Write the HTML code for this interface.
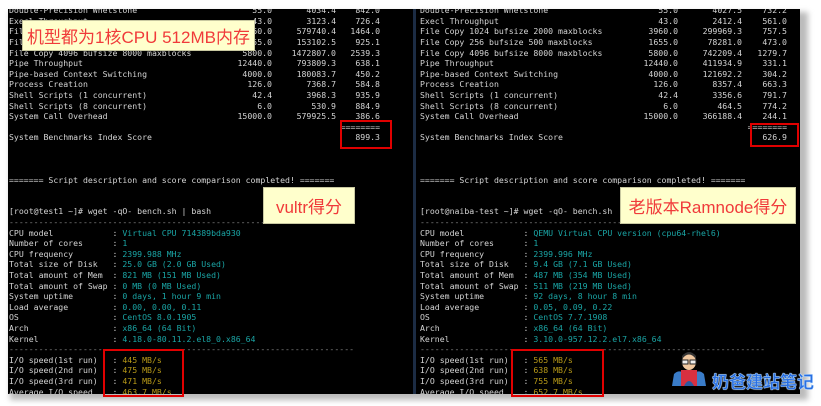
<!DOCTYPE html>
<html><head><meta charset="utf-8"><style>
*{margin:0;padding:0;box-sizing:border-box}
body{width:821px;height:406px;background:#fff;position:relative;overflow:hidden;font-family:"DejaVu Sans Mono","Liberation Mono",monospace}
.shadow{position:absolute;left:10px;top:12px;width:798px;height:388px;background:#bbb;filter:blur(3px)}
.panel{position:absolute;top:9px;height:385px;background:#000;overflow:hidden}
#L{left:8px;width:406px}
#R{left:416px;width:384px}
.div{position:absolute;left:413px;top:9px;width:3px;height:385px;background:#1c2c44}
.txt{position:absolute;left:1px;top:-3.8px;right:0;font-size:8.2px;color:#d4d4d4}
#R .txt{left:4px}
.r{position:relative;height:10.6px;line-height:10.6px;white-space:pre}
.r span{position:absolute;top:0}
.c{color:#1aa5a5;font-weight:normal}
.y{color:#b89a18;font-weight:normal}
.d{color:#888}
.box{position:absolute;background:#ffffcc;border:1px solid #c8c8a0;color:#f03a3a;font-family:"Liberation Sans","Noto Sans CJK SC",sans-serif;font-size:17px;display:flex;align-items:center;justify-content:center;white-space:nowrap}
.red{position:absolute;border:2px solid #e00000}
.logo{position:absolute;left:712px;top:368px;font-family:"Noto Sans CJK SC",sans-serif;font-size:17px;font-weight:bold;color:#2a6ee0;-webkit-text-stroke:0.4px #9cf;text-shadow:0 0 1px #fff,0 0 1px #fff}
</style></head><body>
<div class="shadow"></div>
<div class="panel" id="L"><div class="txt">
<div class="r">Double-Precision Whetstone<span style="right:142px">55.0</span><span style="right:78px">4034.4</span><span style="right:34px">842.0</span></div>
<div class="r">Execl Throughput<span style="right:142px">43.0</span><span style="right:78px">3123.4</span><span style="right:34px">726.4</span></div>
<div class="r">File Copy 1024 bufsize 2000 maxblocks<span style="right:142px">3960.0</span><span style="right:78px">579740.4</span><span style="right:34px">1464.0</span></div>
<div class="r">File Copy 256 bufsize 500 maxblocks<span style="right:142px">1655.0</span><span style="right:78px">153102.5</span><span style="right:34px">925.1</span></div>
<div class="r">File Copy 4096 bufsize 8000 maxblocks<span style="right:142px">5800.0</span><span style="right:78px">1472807.0</span><span style="right:34px">2539.3</span></div>
<div class="r">Pipe Throughput<span style="right:142px">12440.0</span><span style="right:78px">793809.3</span><span style="right:34px">638.1</span></div>
<div class="r">Pipe-based Context Switching<span style="right:142px">4000.0</span><span style="right:78px">180083.7</span><span style="right:34px">450.2</span></div>
<div class="r">Process Creation<span style="right:142px">126.0</span><span style="right:78px">7368.7</span><span style="right:34px">584.8</span></div>
<div class="r">Shell Scripts (1 concurrent)<span style="right:142px">42.4</span><span style="right:78px">3968.3</span><span style="right:34px">935.9</span></div>
<div class="r">Shell Scripts (8 concurrent)<span style="right:142px">6.0</span><span style="right:78px">530.9</span><span style="right:34px">884.9</span></div>
<div class="r">System Call Overhead<span style="right:142px">15000.0</span><span style="right:78px">579925.5</span><span style="right:34px">386.6</span></div>
<div class="r"><span style="right:34px">========</span></div>
<div class="r">System Benchmarks Index Score<span style="right:34px">899.3</span></div>
<div class="r"> </div><div class="r"> </div><div class="r"> </div>
<div class="r">======= Script description and score comparison completed! =======</div>
<div class="r"> </div><div class="r"> </div>
<div class="r">[root@test1 ~]# wget -qO- bench.sh | bash</div>
<div class="r d">----------------------------------------------------------------------</div>
<div class="r">CPU model            : <b class="c">Virtual CPU 714389bda930</b></div>
<div class="r">Number of cores      : <b class="c">1</b></div>
<div class="r">CPU frequency        : <b class="c">2399.988 MHz</b></div>
<div class="r">Total size of Disk   : <b class="c">25.0 GB (2.0 GB Used)</b></div>
<div class="r">Total amount of Mem  : <b class="c">821 MB (151 MB Used)</b></div>
<div class="r">Total amount of Swap : <b class="c">0 MB (0 MB Used)</b></div>
<div class="r">System uptime        : <b class="c">0 days, 1 hour 9 min</b></div>
<div class="r">Load average         : <b class="c">0.00, 0.00, 0.11</b></div>
<div class="r">OS                   : <b class="c">CentOS 8.0.1905</b></div>
<div class="r">Arch                 : <b class="c">x86_64 (64 Bit)</b></div>
<div class="r">Kernel               : <b class="c">4.18.0-80.11.2.el8_0.x86_64</b></div>
<div class="r d">----------------------------------------------------------------------</div>
<div class="r">I/O speed(1st run)   : <b class="y">445 MB/s</b></div>
<div class="r">I/O speed(2nd run)   : <b class="y">475 MB/s</b></div>
<div class="r">I/O speed(3rd run)   : <b class="y">471 MB/s</b></div>
<div class="r">Average I/O speed    : <b class="y">463.7 MB/s</b></div>
</div></div>
<div class="div"></div>
<div class="panel" id="R"><div class="txt">
<div class="r">Double-Precision Whetstone<span style="right:122px">55.0</span><span style="right:58px">4027.5</span><span style="right:13px">732.2</span></div>
<div class="r">Execl Throughput<span style="right:122px">43.0</span><span style="right:58px">2412.4</span><span style="right:13px">561.0</span></div>
<div class="r">File Copy 1024 bufsize 2000 maxblocks<span style="right:122px">3960.0</span><span style="right:58px">299969.3</span><span style="right:13px">757.5</span></div>
<div class="r">File Copy 256 bufsize 500 maxblocks<span style="right:122px">1655.0</span><span style="right:58px">78281.0</span><span style="right:13px">473.0</span></div>
<div class="r">File Copy 4096 bufsize 8000 maxblocks<span style="right:122px">5800.0</span><span style="right:58px">742209.4</span><span style="right:13px">1279.7</span></div>
<div class="r">Pipe Throughput<span style="right:122px">12440.0</span><span style="right:58px">411934.9</span><span style="right:13px">331.1</span></div>
<div class="r">Pipe-based Context Switching<span style="right:122px">4000.0</span><span style="right:58px">121692.2</span><span style="right:13px">304.2</span></div>
<div class="r">Process Creation<span style="right:122px">126.0</span><span style="right:58px">8357.4</span><span style="right:13px">663.3</span></div>
<div class="r">Shell Scripts (1 concurrent)<span style="right:122px">42.4</span><span style="right:58px">3356.6</span><span style="right:13px">791.7</span></div>
<div class="r">Shell Scripts (8 concurrent)<span style="right:122px">6.0</span><span style="right:58px">464.5</span><span style="right:13px">774.2</span></div>
<div class="r">System Call Overhead<span style="right:122px">15000.0</span><span style="right:58px">366188.4</span><span style="right:13px">244.1</span></div>
<div class="r"><span style="right:13px">========</span></div>
<div class="r">System Benchmarks Index Score<span style="right:13px">626.9</span></div>
<div class="r"> </div><div class="r"> </div><div class="r"> </div>
<div class="r">======= Script description and score comparison completed! =======</div>
<div class="r"> </div><div class="r"> </div>
<div class="r">[root@naiba-test ~]# wget -qO- bench.sh</div>
<div class="r d">----------------------------------------------------------------------</div>
<div class="r">CPU model            : <b class="c">QEMU Virtual CPU version (cpu64-rhel6)</b></div>
<div class="r">Number of cores      : <b class="c">1</b></div>
<div class="r">CPU frequency        : <b class="c">2399.996 MHz</b></div>
<div class="r">Total size of Disk   : <b class="c">9.4 GB (7.1 GB Used)</b></div>
<div class="r">Total amount of Mem  : <b class="c">487 MB (354 MB Used)</b></div>
<div class="r">Total amount of Swap : <b class="c">511 MB (219 MB Used)</b></div>
<div class="r">System uptime        : <b class="c">92 days, 8 hour 8 min</b></div>
<div class="r">Load average         : <b class="c">0.05, 0.09, 0.22</b></div>
<div class="r">OS                   : <b class="c">CentOS 7.7.1908</b></div>
<div class="r">Arch                 : <b class="c">x86_64 (64 Bit)</b></div>
<div class="r">Kernel               : <b class="c">3.10.0-957.12.2.el7.x86_64</b></div>
<div class="r d">----------------------------------------------------------------------</div>
<div class="r">I/O speed(1st run)   : <b class="y">565 MB/s</b></div>
<div class="r">I/O speed(2nd run)   : <b class="y">638 MB/s</b></div>
<div class="r">I/O speed(3rd run)   : <b class="y">755 MB/s</b></div>
<div class="r">Average I/O speed    : <b class="y">652.7 MB/s</b></div>
</div></div>

<div class="box" style="left:22px;top:20px;width:233px;height:31px">机型都为1核CPU 512MB内存</div>
<div class="box" style="left:263px;top:187px;width:92px;height:37px">vultr得分</div>
<div class="box" style="left:620px;top:187px;width:176px;height:37px">老版本Ramnode得分</div>
<div class="red" style="left:340px;top:120px;width:52px;height:29px"></div>
<div class="red" style="left:750px;top:123px;width:49px;height:24px"></div>
<div class="red" style="left:103px;top:349px;width:81px;height:48px"></div>
<div class="red" style="left:511px;top:349px;width:93px;height:48px"></div>

<svg style="position:absolute;left:668px;top:350px" width="42" height="38" viewBox="0 0 42 38">
<path d="M4 36 L6 24 Q10 20 14 22 L14 36Z" fill="#3a7cc8"/>
<path d="M38 36 L36 24 Q32 20 28 22 L28 36Z" fill="#3a7cc8"/>
<rect x="13" y="20" width="16" height="16" fill="#d83040"/>
<path d="M16 36 Q21 26 26 36Z" fill="#2a5aa0"/>
<ellipse cx="21" cy="12" rx="7" ry="8" fill="#f0c8a0"/>
<path d="M14 9 Q21 0 28 9 L28 6 Q21 -2 14 6Z" fill="#333"/>
<rect x="14" y="10" width="6" height="4" fill="#eee" stroke="#222"/>
<rect x="22" y="10" width="6" height="4" fill="#eee" stroke="#222"/>
</svg>
<div class="logo">奶爸建站笔记</div>
</body></html>
